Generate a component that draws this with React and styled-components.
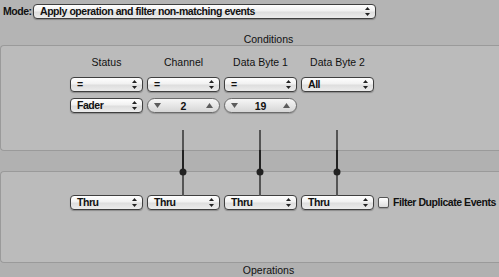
import React from 'react';
import styled, { createGlobalStyle } from 'styled-components';

const GlobalStyle = createGlobalStyle`
  html, body {
    margin: 0;
    padding: 0;
    background: #b4b4b4;
    font-family: "Liberation Sans", Arial, sans-serif;
    font-size: 11px;
    color: #111;
    overflow: hidden;
  }
`;

const Window = styled.div`
  width: 499px;
  height: 277px;
  position: relative;
  overflow: hidden;
  background: #b4b4b4;
`;

const ModeRow = styled.div`
  display: flex;
  align-items: center;
  padding: 4px 0 0 3px;
  gap: 3px;
`;

const Label = styled.span`
  font-weight: bold;
  font-size: 10.5px;
  letter-spacing: -0.45px;
  line-height: 15px;
  white-space: nowrap;
`;

const ModeLabel = styled(Label)`
  width: 27px;
`;

const SectionTitle = styled.div`
  text-align: center;
  font-size: 10.5px;
  line-height: 12px;
  margin-top: 14px;
  padding-left: 38px;
`;

const Panel = styled.div`
  background: #bbbbbb;
  border: 1px solid #9a9a9a;
  border-right: none;
  border-radius: 4px 0 0 4px;
  height: ${(p) => p.$height}px;
  box-sizing: border-box;
  padding-top: ${(p) => p.$pad}px;
`;

const Band = styled.div`
  height: ${(p) => p.$height}px;
  background: #b1b1b1;
  text-align: center;
  font-size: 10.5px;
  line-height: 14px;
  padding-left: 38px;
`;

const Grid = styled.div`
  display: grid;
  grid-template-columns: repeat(4, 73px);
  column-gap: 4px;
  row-gap: ${(p) => p.$rowGap || 0}px;
  margin-left: 69px;
  align-items: center;
`;

const Header = styled.div`
  text-align: center;
  font-size: 10.5px;
  line-height: 13px;
  margin-bottom: 2px;
`;

const SelectBox = styled.div`
  box-sizing: border-box;
  height: 15px;
  width: ${(p) => (p.$width ? `${p.$width}px` : 'auto')};
  border: 1px solid #3f3f3f;
  border-radius: 4px;
  background: linear-gradient(#ffffff 0%, #f1f1f1 45%, #dedede 55%, #ececec 100%);
  box-shadow: 0 1px 1px rgba(0, 0, 0, 0.25);
  display: flex;
  align-items: center;
  justify-content: space-between;
  padding: 0 5px 0 6px;
  font-weight: bold;
  font-size: 10.5px;
  letter-spacing: -0.45px;
  line-height: 13px;
  white-space: nowrap;
`;

const Stepper = styled.div`
  box-sizing: border-box;
  height: 15px;
  border: 1px solid #6a6a6a;
  border-radius: 8px;
  background: linear-gradient(#f6f6f6 0%, #e6e6e6 50%, #d6d6d6 100%);
  box-shadow: 0 1px 1px rgba(0, 0, 0, 0.2);
  display: flex;
  align-items: center;
  justify-content: space-between;
  padding: 0 6px;
  font-weight: bold;
  font-size: 10.5px;
`;

const FaderLayer = styled.div`
  position: absolute;
  top: 130px;
  left: 69px;
  display: grid;
  grid-template-columns: repeat(4, 73px);
  column-gap: 4px;
  pointer-events: none;
`;

const FaderSlot = styled.div`
  display: flex;
  justify-content: center;
`;

const CheckRow = styled.div`
  display: flex;
  align-items: center;
  gap: 4px;
  position: absolute;
  left: 378px;
  top: 195px;
`;

const CheckBox = styled.div`
  width: 11px;
  height: 11px;
  box-sizing: border-box;
  border: 1px solid #555;
  border-radius: 2px;
  background: linear-gradient(#ffffff, #dcdcdc);
  box-shadow: 0 1px 1px rgba(0, 0, 0, 0.2);
`;

const UpDown = () => (
  <svg width="5" height="9" viewBox="0 0 5 9">
    <path d="M2.5 0 L5 3 L0 3 Z" fill="#222" />
    <path d="M0 6 L5 6 L2.5 9 Z" fill="#222" />
  </svg>
);

const Tri = ({ up }) => (
  <svg width="7" height="5" viewBox="0 0 7 5">
    <path d={up ? 'M3.5 0 L7 5 L0 5 Z' : 'M0 0 L7 0 L3.5 5 Z'} fill="#5c5c5c" />
  </svg>
);

const Select = ({ value, width }) => (
  <SelectBox $width={width}>
    <span>{value}</span>
    <UpDown />
  </SelectBox>
);

const Step = ({ value }) => (
  <Stepper>
    <Tri />
    <span>{value}</span>
    <Tri up />
  </Stepper>
);

const Fader = () => (
  <svg width="8" height="66" viewBox="0 0 8 66">
    <rect x="3" y="0" width="2" height="20" fill="#555" />
    <rect x="3" y="20" width="2" height="22" fill="#222" />
    <rect x="3" y="42" width="2" height="24" fill="#555" />
    <circle cx="4" cy="42" r="3.5" fill="#222" />
  </svg>
);

export default function App() {
  return (
    <Window>
      <GlobalStyle />
      <ModeRow>
        <ModeLabel>Mode:</ModeLabel>
        <Select value="Apply operation and filter non-matching events" width={343} />
      </ModeRow>
      <SectionTitle>Conditions</SectionTitle>
      <Panel $height={106} $pad={10}>
        <Grid $rowGap={6}>
          <Header>Status</Header>
          <Header>Channel</Header>
          <Header>Data Byte 1</Header>
          <Header>Data Byte 2</Header>
          <Select value="=" />
          <Select value="=" />
          <Select value="=" />
          <Select value="All" />
          <Select value="Fader" />
          <Step value="2" />
          <Step value="19" />
        </Grid>
      </Panel>
      <Band $height={20} />
      <Panel $height={92} $pad={23}>
        <Grid>
          <Select value="Thru" />
          <Select value="Thru" />
          <Select value="Thru" />
          <Select value="Thru" />
        </Grid>
      </Panel>
      <Band $height={15}>Operations</Band>
      <CheckRow>
        <CheckBox />
        <Label>Filter Duplicate Events</Label>
      </CheckRow>
      <FaderLayer>
        <FaderSlot />
        <FaderSlot><Fader /></FaderSlot>
        <FaderSlot><Fader /></FaderSlot>
        <FaderSlot><Fader /></FaderSlot>
      </FaderLayer>
    </Window>
  );
}
